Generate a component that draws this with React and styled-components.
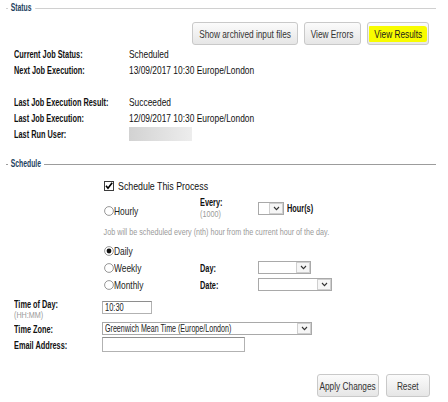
import React from "react";
import styled, { createGlobalStyle } from "styled-components";

const GlobalStyle = createGlobalStyle`
  body {
    margin: 0;
    background: #fff;
    font-family: "Liberation Sans", Arial, sans-serif;
    color: #000;
  }
`;

const squeeze = (sx, origin = "left") => `
  display: inline-block;
  white-space: nowrap;
  transform: scaleX(${sx});
  transform-origin: ${origin} center;
`;

const Page = styled.div`
  width: 430px;
  padding: 2px 12px 0 6px;
`;

const Legend = styled.div`
  display: flex;
  align-items: center;
  height: 12px;
  background: linear-gradient(${(p) => p.$line}, ${(p) => p.$line}) left center / 100% 1px no-repeat;
`;

const LegendText = styled.span`
  ${squeeze(0.68)}
  margin-left: 2px;
  padding: 0 5px 0 4px;
  background: #fff;
  font-size: 10px;
  line-height: 12px;
  font-weight: bold;
  color: #233f5e;
`;

const ButtonBar = styled.div`
  display: flex;
  justify-content: flex-end;
  gap: ${(p) => p.$gap || 6}px;
  margin-top: ${(p) => p.$top}px;
  padding-right: ${(p) => p.$right}px;
`;

const Button = styled.button`
  display: flex;
  align-items: center;
  justify-content: center;
  width: ${(p) => p.$w}px;
  height: 23px;
  padding: 0;
  border: 1px solid #c9c9c9;
  border-radius: 3px;
  background: linear-gradient(#fbfbfb, #e6e6e6);
  font-family: inherit;
  font-size: 10.5px;
  color: #333;
`;

const ButtonText = styled.span`
  ${squeeze(0.79, "center")}
`;

const Marker = styled.span`
  display: flex;
  align-items: center;
  justify-content: center;
  width: 58px;
  height: 16px;
  margin-top: 1px;
  background: #f8fc00;
  border-radius: 1px 3px 2px 1px;
  color: #1a1a1a;
`;

const InfoGrid = styled.div`
  display: grid;
  grid-template-columns: 115px 1fr;
  grid-auto-rows: 16px;
  align-items: center;
  margin-top: 1px;
  padding-left: 8px;
`;

const Label = styled.div`
  ${squeeze(0.7)}
  font-size: 10.5px;
  font-weight: bold;
  line-height: 12px;
  color: #111;
`;

const Value = styled.div`
  ${squeeze(0.8)}
  font-size: 10.5px;
  color: #111;
`;

const Blurred = styled.div`
  width: 63px;
  height: 14px;
  background: linear-gradient(90deg, #d2d2d2, #ededed);
`;

const Section = styled.div`
  margin-top: ${(p) => p.$top}px;
`;

const Options = styled.div`
  display: grid;
  grid-template-columns: 98px 58px auto;
  grid-template-rows: 16px 28px 20px 17px 17px 17px;
  align-items: center;
  margin: 8px 0 0 96px;
`;

const CheckRow = styled.label`
  grid-column: 1 / -1;
  display: flex;
  align-items: center;
  gap: 4px;
  padding-left: 2px;
  font-size: 10.5px;
  color: #111;
`;

const OptionLabel = styled.label`
  grid-column: 1;
  display: flex;
  align-items: center;
  padding: ${(p) => (p.$low ? "5px" : "0")} 0 0 2px;
  font-size: 10.5px;
  color: #222;
`;

const OptionText = styled.span`
  ${(p) => squeeze(p.$sx || 0.8)}
`;

const StackCell = styled.div`
  display: flex;
  flex-direction: column;
  align-items: flex-start;
  align-self: ${(p) => (p.$top ? "start" : "center")};
`;

const Hint = styled.div`
  ${squeeze(0.8)}
  font-size: 9px;
  line-height: ${(p) => p.$lh || 12}px;
  color: #9a9a9a;
`;

const HintRow = styled(Hint)`
  grid-column: 1 / -1;
  padding-left: 2px;
`;

const ControlCell = styled.div`
  display: flex;
  align-items: center;
  gap: 3px;
`;

const SelectBox = styled.div`
  display: flex;
  box-sizing: border-box;
  width: ${(p) => p.$w}px;
  height: 13px;
  border: 1px solid #a9a9a9;
  background: #fff;
  font-size: 10px;
`;

const SelectText = styled.span`
  flex: 1;
  padding-left: 2px;
  line-height: 11px;
  overflow: hidden;
  color: #222;
`;

const SelectArrow = styled.span`
  width: 12px;
  display: flex;
  align-items: center;
  justify-content: center;
  border: 1px solid #cfcfcf;
  background: #f6f6f6;
`;

const FieldInput = styled.div`
  box-sizing: border-box;
  width: ${(p) => p.$w}px;
  height: ${(p) => p.$h}px;
  margin-top: ${(p) => p.$top || 0}px;
  border: 1px solid #b2b2b2;
  border-top-color: #8e8e8e;
  padding-left: 2px;
  font-size: 10px;
  line-height: ${(p) => p.$h - 2}px;
  color: #222;
`;

const FieldText = styled.span`
  ${(p) => squeeze(p.$sx || 0.75)}
`;

const FormGrid = styled.div`
  display: grid;
  grid-template-columns: 88px auto;
  grid-template-rows: 23px 15px 17px;
  align-items: center;
  margin-top: 5px;
  padding-left: 8px;
`;

const Radio = ({ checked }) => (
  <svg width="10" height="10" viewBox="0 0 10 10">
    <circle cx="5" cy="5" r="4.4" fill="#fff" stroke="#7d7d7d" strokeWidth="0.8" />
    {checked && <circle cx="5" cy="5" r="2.4" fill="#111" />}
  </svg>
);

const Checkbox = () => (
  <svg width="10" height="10" viewBox="0 0 10 10">
    <rect x="0.5" y="0.5" width="9" height="9" fill="#fff" stroke="#3c3c3c" />
    <path d="M2 4.8 L4 7.3 L8.2 1.8" fill="none" stroke="#000" strokeWidth="1.6" />
  </svg>
);

const Select = ({ w, text }) => (
  <SelectBox $w={w}>
    <SelectText>{text && <FieldText $sx={0.71}>{text}</FieldText>}</SelectText>
    <SelectArrow>
      <svg width="7" height="5" viewBox="0 0 7 5">
        <path d="M1 1 L3.5 3.6 L6 1" fill="none" stroke="#333" strokeWidth="1.1" />
      </svg>
    </SelectArrow>
  </SelectBox>
);

const statusRows = [
  ["Current Job Status:", "Scheduled"],
  ["Next Job Execution:", "13/09/2017 10:30 Europe/London"],
  ["", ""],
  ["Last Job Execution Result:", "Succeeded"],
  ["Last Job Execution:", "12/09/2017 10:30 Europe/London"],
];

const Option = ({ checked, low, children }) => (
  <OptionLabel $low={low}>
    <Radio checked={checked} />
    <OptionText>{children}</OptionText>
  </OptionLabel>
);

export default function App() {
  return (
    <Page>
      <GlobalStyle />
      <Legend $line="#d0d0d0">
        <LegendText>Status</LegendText>
      </Legend>
      <ButtonBar $top={8} $right={7}>
        <Button $w={106}>
          <ButtonText>Show archived input files</ButtonText>
        </Button>
        <Button $w={57}>
          <ButtonText>View Errors</ButtonText>
        </Button>
        <Button $w={62}>
          <Marker>
            <ButtonText>View Results</ButtonText>
          </Marker>
        </Button>
      </ButtonBar>
      <InfoGrid>
        {statusRows.map(([label, value], i) => (
          <React.Fragment key={i}>
            <Label>{label}</Label>
            <Value>{value}</Value>
          </React.Fragment>
        ))}
        <Label>Last Run User:</Label>
        <Blurred />
      </InfoGrid>

      <Section $top={16}>
        <Legend $line="#9c9c9c">
          <LegendText>Schedule</LegendText>
        </Legend>
        <Options>
          <CheckRow>
            <Checkbox />
            <OptionText $sx={0.84}>Schedule This Process</OptionText>
          </CheckRow>
          <Option low>Hourly</Option>
          <StackCell>
            <Label>Every:</Label>
            <Hint>(1000)</Hint>
          </StackCell>
          <ControlCell>
            <Select w={26} />
            <Label>Hour(s)</Label>
          </ControlCell>
          <HintRow $lh={20}>
            Job will be scheduled every (nth) hour from the current hour of the day.
          </HintRow>
          <Option checked>Daily</Option>
          <span />
          <span />
          <Option>Weekly</Option>
          <Label>Day:</Label>
          <Select w={53} />
          <Option>Monthly</Option>
          <Label>Date:</Label>
          <Select w={74} />
        </Options>
        <FormGrid>
          <StackCell $top>
            <Label>Time of Day:</Label>
            <Hint $lh={11}>(HH:MM)</Hint>
          </StackCell>
          <StackCell $top>
            <FieldInput $w={50} $h={13} $top={3}>
              <FieldText>10:30</FieldText>
            </FieldInput>
          </StackCell>
          <Label>Time Zone:</Label>
          <Select w={210} text="Greenwich Mean Time (Europe/London)" />
          <Label>Email Address:</Label>
          <FieldInput $w={143} $h={15} />
        </FormGrid>
        <ButtonBar $top={21} $right={6} $gap={7}>
          <Button $w={62}>
            <ButtonText>Apply Changes</ButtonText>
          </Button>
          <Button $w={44}>
            <ButtonText>Reset</ButtonText>
          </Button>
        </ButtonBar>
      </Section>
    </Page>
  );
}
